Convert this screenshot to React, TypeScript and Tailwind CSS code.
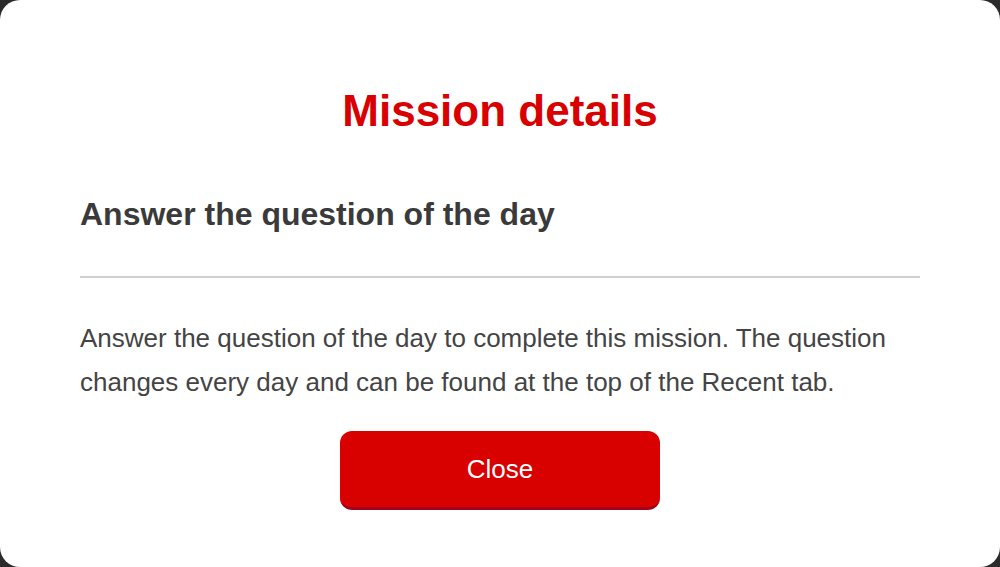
import React from "react";

const MissionDetails = () => {
  return (
    <div className="h-[567px] w-[1000px] bg-[#2b2b2b] overflow-hidden">
      <div
        className="h-full w-full bg-white rounded-[20px] px-20 pt-[89px] flex flex-col"
        style={{ fontFamily: "'Liberation Sans', Arial, sans-serif" }}
      >
        {/* Title */}
        <h1 className="text-center text-[44px] leading-[44px] font-bold text-[#d80000]">
          Mission details
        </h1>

        <h2 className="mt-[65px] text-[32px] leading-[32px] font-bold text-[#3a3a3a]">
          Answer the question of the day
        </h2>

        <div className="mt-[46px] h-[2px] bg-[#cfcfcf]" />

        <p className="mt-[38px] text-[26px] leading-[44px] text-[#444444]">
          Answer the question of the day to complete this mission. The question
          changes every day and can be found at the top of the Recent tab.
        </p>

        <div className="mt-[27px] flex justify-center">
          <button className="w-[320px] h-[79px] rounded-[12px] bg-[#d90000] border-b-[3px] border-[#a3001c] text-white text-[26px] flex items-center justify-center">
            Close
          </button>
        </div>
      </div>
    </div>
  );
};

export default function App() {
  return <MissionDetails />;
}
